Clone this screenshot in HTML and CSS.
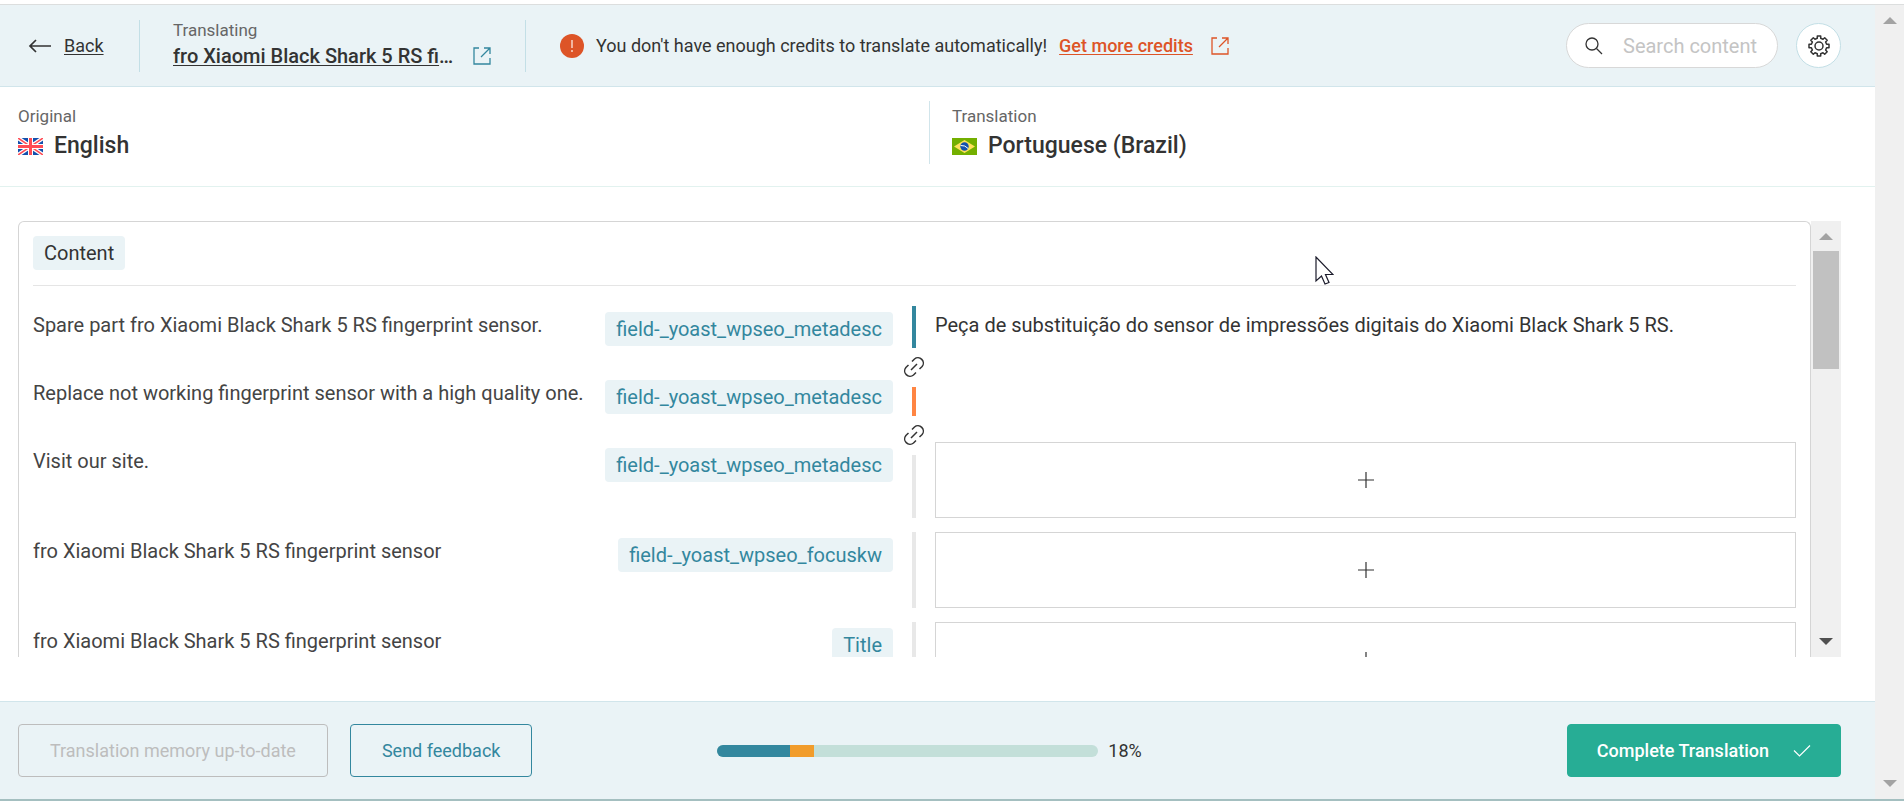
FILE: index.html
```html
<!DOCTYPE html>
<html lang="en">
<head>
<meta charset="utf-8">
<title>Translation editor</title>
<link rel="stylesheet" href="styles.css">
</head>
<body>
<div class="window">
  <div class="app">
    <header class="topbar">
      <a class="back" href="#"><svg width="24" height="16" viewBox="0 0 24 16" fill="none" stroke="#333" stroke-width="1.7"><path d="M23 8H2M8 2 2 8l6 6"/></svg><span>Back</span></a>
      <div class="job">
        <span class="label">Translating</span>
        <div class="job-row">
          <a class="job-title" href="#">fro Xiaomi Black Shark 5 RS fingerprint sensor</a>
          <svg class="ext" width="18" height="18" viewBox="0 0 18 18" fill="none" stroke="#33879e" stroke-width="1.3"><path d="M6 1H1v16h16v-6M11 1h6v6M17 1 8 10"/></svg>
        </div>
      </div>
      <div class="notice">
        <svg width="24" height="24" viewBox="0 0 24 24"><circle cx="12" cy="12" r="12" fill="#dd5427"/><path d="M12 6v8M12 16v2" stroke="#f7cdbd" stroke-width="1.6"/></svg>
        <span>You don't have enough credits to translate automatically!</span>
        <a class="credits" href="#">Get more credits</a>
        <svg class="ext" width="18" height="18" viewBox="0 0 18 18" fill="none" stroke="#dd5427" stroke-width="1.3"><path d="M6 1H1v16h16v-6M11 1h6v6M17 1 8 10"/></svg>
      </div>
      <div class="tools">
        <label class="search">
          <svg width="18" height="18" viewBox="0 0 18 18" fill="none" stroke="#333" stroke-width="1.3"><circle cx="7" cy="7" r="6"/><path d="m11.500 11.500 5.500 5.500"/></svg>
          <input type="text" placeholder="Search content" aria-label="Search content">
        </label>
        <button class="gear" type="button" aria-label="Settings">
          <svg width="22" height="22" viewBox="0 0 22 22" fill="none" stroke="#333" stroke-width="1.5" stroke-linejoin="round"><circle cx="11" cy="11" r="4"/><path d="M9.300 1h3.400v2.300l2.300 1 1.700-1.600 2.500 2.500-1.600 1.700 1 2.300H21v3.600h-2.400l-1 2.300 1.600 1.700-2.500 2.500-1.700-1.600-2.300 1V21H9.300v-2.300l-2.300-1-1.700 1.600-2.500-2.500 1.600-1.700-1-2.300H1V9.200h2.400l1-2.300-1.600-1.700 2.500-2.500L7 4.300l2.300-1z"/></svg>
        </button>
      </div>
    </header>

    <section class="languages">
      <div class="lang">
        <span class="label">Original</span>
        <div class="lang-name">
          <svg class="flag" viewBox="0 0 25 17"><path fill="#1450ad" d="M0 0h25v17H0z"/><path stroke="#fff" stroke-width="4" d="m0 0 25 17M25 0 0 17"/><path stroke="#ff4b55" stroke-width="1.500" d="m0 0 25 17M25 0 0 17"/><path stroke="#fff" stroke-width="5" d="M12.500 0v17M0 8.500h25"/><path stroke="#ff4b55" stroke-width="3" d="M12.500 0v17M0 8.500h25"/></svg>
          <span>English</span>
        </div>
      </div>
      <div class="lang lang-target">
        <span class="label">Translation</span>
        <div class="lang-name">
          <svg class="flag" viewBox="0 0 25 17"><path fill="#73af00" d="M0 0h25v17H0z"/><path fill="#ffe15a" d="M12.500 2 23 8.500 12.500 15 2 8.500z"/><circle cx="12.500" cy="8.500" r="4.200" fill="#1450ad"/><path d="M8.600 7.500q4.500-.5 7.500 3" fill="none" stroke="#fff"/></svg>
          <span>Portuguese (Brazil)</span>
        </div>
      </div>
    </section>

    <main class="editor">
      <div class="panel">
        <div class="panel-head"><span class="chip">Content</span></div>
        <div class="row">
          <p class="source">Spare part fro Xiaomi Black Shark 5 RS fingerprint sensor.</p>
          <span class="tag">field-_yoast_wpseo_metadesc</span>
          <div class="status"><i class="bar bar-done"></i><svg class="link" viewBox="0 0 22 22"><path d="M9 5.500 11.500 3a5.400 5.400 0 0 1 7.600 7.600L16.500 13M13 16.500 10.500 19a5.400 5.400 0 0 1-7.600-7.600L5.500 9M8 14l6-6"/></svg></div>
          <p class="target">Peça de substituição do sensor de impressões digitais do Xiaomi Black Shark 5 RS.</p>
        </div>
        <div class="row">
          <p class="source">Replace not working fingerprint sensor with a high quality one.</p>
          <span class="tag">field-_yoast_wpseo_metadesc</span>
          <div class="status"><i class="bar bar-part"></i><svg class="link" viewBox="0 0 22 22"><path d="M9 5.500 11.500 3a5.400 5.400 0 0 1 7.600 7.600L16.500 13M13 16.500 10.500 19a5.400 5.400 0 0 1-7.600-7.600L5.500 9M8 14l6-6"/></svg></div>
        </div>
        <div class="row">
          <p class="source">Visit our site.</p>
          <span class="tag">field-_yoast_wpseo_metadesc</span>
          <div class="status"><i class="bar bar-linked"></i></div>
          <button class="add" type="button" aria-label="Add translation"><svg width="16" height="16" viewBox="0 0 16 16"><path d="M8 0v16M0 8h16"/></svg></button>
        </div>
        <div class="row">
          <p class="source">fro Xiaomi Black Shark 5 RS fingerprint sensor</p>
          <span class="tag">field-_yoast_wpseo_focuskw</span>
          <div class="status"><i class="bar"></i></div>
          <button class="add" type="button" aria-label="Add translation"><svg width="16" height="16" viewBox="0 0 16 16"><path d="M8 0v16M0 8h16"/></svg></button>
        </div>
        <div class="row">
          <p class="source">fro Xiaomi Black Shark 5 RS fingerprint sensor</p>
          <span class="tag">Title</span>
          <div class="status"><i class="bar"></i></div>
          <button class="add" type="button" aria-label="Add translation"><svg width="16" height="16" viewBox="0 0 16 16"><path d="M8 0v16M0 8h16"/></svg></button>
        </div>
      </div>
      <div class="scroll">
        <i class="arrow-up"></i><i class="thumb"></i><i class="arrow-down arrow-dark"></i>
      </div>
    </main>

    <footer class="bottombar">
      <div class="actions">
        <button class="btn" type="button" disabled>Translation memory up-to-date</button>
        <button class="btn btn-outline" type="button">Send feedback</button>
      </div>
      <div class="progress">
        <div class="track"><i class="fill-done" style="width:19%"></i><i class="fill-part" style="width:6.300%"></i></div>
        <span>18%</span>
      </div>
      <button class="btn btn-primary" type="button">Complete Translation<svg width="18" height="12" viewBox="0 0 18 12" fill="none" stroke="#fff" stroke-width="1.2"><path d="m1 5.500 5.500 5.500L17 .5"/></svg></button>
    </footer>
  </div>
  <div class="scroll scroll-page"><i class="arrow-up"></i><i class="arrow-down"></i></div>
</div>
<svg class="cursor" width="19" height="29" viewBox="0 0 19 29"><path d="M1 1v24l5.500-5 3.500 8 4-1.500-3.500-8H18z" fill="#fff" stroke="#1b1b2b" stroke-width="1.200"/></svg>
</body>
</html>
```
FILE: styles.css
```css
* { box-sizing: border-box; }
body {
  margin: 0;
  padding: 4px 0 1px;
  height: 100vh;
  font: 20px/24px Roboto, sans-serif;
  color: #333;
  background: #fff;
  overflow: hidden;
}
p { margin: 0; }
svg { flex: none; }
button, input { font: inherit; }
a { color: inherit; text-underline-offset: 2px; text-decoration-thickness: 1px; }

.window {
  display: flex;
  height: 100%;
  border-top: 1px solid #dcdede;
  border-bottom: 2px solid #a4bfc0;
}
.app { flex: 1; min-width: 0; display: flex; flex-direction: column; }
.label { font-size: 17px; line-height: 20px; color: #666; }

/* Top bar */
.topbar {
  display: flex;
  align-items: center;
  height: 82px;
  padding: 0 34px 0 28px;
  background: #eaf3f6;
  border-bottom: 1px solid #d1e5eb;
}
.back {
  display: flex;
  align-items: center;
  gap: 12px;
  width: 112px;
  height: 52px;
  font-size: 18px;
  border-right: 1px solid #c3dfe6;
  text-decoration: none;
}
.back span { text-decoration: underline; }
.job {
  width: 386px;
  height: 52px;
  padding-left: 33px;
  border-right: 1px solid #c3dfe6;
}
.job .label { display: block; }
.job-row { display: flex; align-items: center; gap: 12px; padding-top: 4px; }
.job-title {
  width: 288px;
  font-weight: 500;
  white-space: nowrap;
  overflow: hidden;
  text-overflow: ellipsis;
}
.notice { display: flex; align-items: center; gap: 12px; padding-left: 34px; font-size: 18px; }
.credits { color: #dd5427; font-weight: 500; }
.notice .ext { margin-left: 6px; }
.tools { display: flex; gap: 18px; margin-left: auto; }
.search {
  display: flex;
  align-items: center;
  gap: 20px;
  width: 212px;
  height: 45px;
  padding: 0 8px 0 18px;
  background: #fff;
  border: 1px solid #d8d8d8;
  border-radius: 23px;
}
.search input { min-width: 0; flex: 1; padding: 0; border: 0; outline: 0; background: none; }
.search input::placeholder { color: #c4c4c4; }
.gear {
  display: grid;
  place-items: center;
  width: 45px;
  height: 45px;
  padding: 0;
  background: #fff;
  border: 1px solid #c3dfe6;
  border-radius: 50%;
}

/* Language bar */
.languages {
  display: grid;
  grid-template-columns: 911px 1fr;
  height: 100px;
  padding: 14px 0 0 18px;
  border-bottom: 1px solid #e2f2ef;
}
.lang { height: 63px; padding-top: 5px; }
.lang .label { display: block; }
.lang-target { padding-left: 22px; border-left: 1px solid #d1e5eb; }
.lang-name { display: flex; align-items: center; gap: 11px; padding-top: 6px; font-size: 23px; line-height: 28px; font-weight: 500; }
.flag { width: 25px; height: 17px; }

/* Editor */
.editor { flex: 1; min-height: 0; display: flex; padding: 34px 34px 44px 18px; }
.panel {
  flex: 1;
  min-width: 0;
  padding: 14px 14px 0;
  border: 1px solid #d5d5d5;
  border-bottom: 0;
  border-radius: 6px 6px 0 0;
  overflow: hidden;
}
.panel-head { padding-bottom: 15px; margin-bottom: 20px; border-bottom: 1px solid #e5e5e5; }
.chip, .tag {
  display: block;
  width: max-content;
  padding: 5px 11px;
  background: #eaf3f6;
  border-radius: 4px;
}
.tag { align-self: start; justify-self: end; margin-top: 6px; color: #33879e; }
.row {
  display: grid;
  grid-template-columns: 1fr auto 42px 861px;
  min-height: 54px;
  margin-bottom: 14px;
}
.source, .target { padding-top: 7px; }
.source { color: #444; }
.status { display: flex; flex-direction: column; align-items: center; }
.bar { width: 4px; flex: 1; background: #e8e8e8; }
.bar-done { flex: none; height: 42px; background: #33879e; }
.bar-part { flex: none; height: 29px; margin-top: 13px; background: #ff8542; }
.bar-linked { margin-top: 13px; }
.link { width: 22px; height: 22px; margin: 8px 0 -18px; fill: none; stroke: #333; stroke-width: 1.5; }
.add { display: grid; place-items: center; height: 76px; padding: 0; background: #fff; border: 1px solid #d5d5d5; }
.add path { stroke: #333; stroke-width: 1.2; }

/* Scroll bars */
.scroll { display: flex; flex-direction: column; align-items: center; width: 30px; padding: 12px 0; background: #f0f0f0; }
.scroll-page { width: 29px; }
.arrow-up, .arrow-down { border: 7px solid transparent; }
.arrow-up { border-top: 0; border-bottom-color: #a3a3a3; }
.arrow-down { margin-top: auto; border-bottom: 0; border-top-color: #a3a3a3; }
.arrow-dark { border-top-color: #505050; }
.thumb { width: 26px; height: 118px; margin-top: 11px; background: #c1c1c1; }

/* Bottom bar */
.bottombar {
  display: grid;
  grid-template-columns: 1fr auto 1fr;
  align-items: center;
  height: 98px;
  padding: 0 34px 0 18px;
  background: #eaf3f6;
  border-top: 1px solid #d1e5eb;
}
.actions { display: flex; gap: 22px; }
.btn {
  height: 53px;
  padding: 0 31px;
  font-size: 18px;
  color: #bdbdbd;
  background: none;
  border: 1px solid #bdbdbd;
  border-radius: 4px;
}
.btn-outline { color: #33879e; border-color: #33879e; }
.btn-primary { display: flex; align-items: center; justify-self: end; gap: 24px; padding: 0 29px; color: #fff; font-weight: 500; background: #27ad95; border-color: #27ad95; }
.progress { display: flex; align-items: center; gap: 10px; font-size: 18px; }
.track { display: flex; width: 381px; height: 12px; border-radius: 6px; overflow: hidden; background: #c3dfd9; }
.fill-done { background: #33879e; }
.fill-part { background: #f19c2b; }

.cursor { position: absolute; left: 1315px; top: 256px; }
```
